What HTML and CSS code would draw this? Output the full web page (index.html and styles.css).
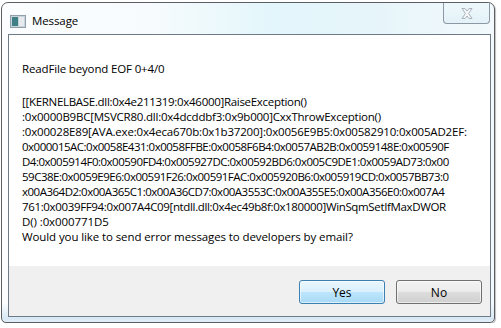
FILE: index.html
```html
<!DOCTYPE html>
<html>
<head>
<meta charset="utf-8">
<link rel="stylesheet" href="styles.css">
</head>
<body>
<div class="window">
  <div class="titlebar">
    <svg class="appicon" width="16" height="13" viewBox="0 0 16 13">
      <rect x="0.5" y="0.5" width="15" height="12" fill="#c9d3da" stroke="#8fa0ac"/>
      <rect x="2" y="2" width="6" height="9" fill="#3f7f86"/>
      <rect x="9" y="2" width="5" height="9" fill="#e4eaee"/>
    </svg>
    <span class="title">Message</span>
    <div class="close">
      <svg width="14" height="13" viewBox="0 0 14 13">
        <path d="M2 1.5 L5 1.5 L7 4 L9 1.5 L12 1.5 L8.6 6.5 L12 11.5 L9 11.5 L7 9 L5 11.5 L2 11.5 L5.4 6.5 Z" fill="#f4f6f8" stroke="#a9b3bb" stroke-width="1"/>
      </svg>
    </div>
  </div>
  <div class="client">
    <div class="content">
      <p class="msg">ReadFile beyond EOF 0+4/0</p>
      <div class="trace">
        <div class="line t-30">[[KERNELBASE.dll:0x4e211319:0x46000]RaiseException()</div>
        <div class="line t-22">:0x0000B9BC[MSVCR80.dll:0x4dcddbf3:0x9b000]CxxThrowException()</div>
        <div class="line t-18">:0x00028E89[AVA.exe:0x4eca670b:0x1b37200]:0x0056E9B5:0x00582910:0x005AD2EF:</div>
        <div class="line t-50">0x000015AC:0x0058E431:0x0058FFBE:0x0058F6B4:0x0057AB2B:0x0059148E:0x00590F</div>
        <div class="line t-50">D4:0x005914F0:0x00590FD4:0x005927DC:0x00592BD6:0x005C9DE1:0x0059AD73:0x00</div>
        <div class="line t-50">59C38E:0x0059E9E6:0x00591F26:0x00591FAC:0x005920B6:0x005919CD:0x0057BB73:0</div>
        <div class="line t-50">x00A364D2:0x00A365C1:0x00A36CD7:0x00A3553C:0x00A355E5:0x00A356E0:0x007A4</div>
        <div class="line t-35">761:0x0039FF94:0x007A4C09[ntdll.dll:0x4ec49b8f:0x180000]WinSqmSetIfMaxDWOR</div>
        <div class="line">D() :0x000771D5</div>
        <div class="line">Would you like to send error messages to developers by email?</div>
      </div>
    </div>
    <div class="footer">
      <button class="btn btn-yes">Yes</button>
      <button class="btn btn-no">No</button>
    </div>
  </div>
</div>
</body>
</html>
```

FILE: styles.css
```css
html, body {
  margin: 0;
  padding: 0;
  background: #ffffff;
}
body {
  font-family: "Open Sans", "Noto Sans", sans-serif;
  font-size: 11.5px;
  letter-spacing: -0.1px;
  color: #000;
}
.window {
  margin: 2px 0 0 1px;
  width: 494px;
  height: 321px;
  box-sizing: border-box;
  border: 1px solid #5b5f63;
  border-radius: 7px 7px 5px 5px;
  padding: 0 3px 5px 6px;
  display: flex;
  flex-direction: column;
  background:
    linear-gradient(180deg, rgba(255,255,255,0) 0, rgba(255,255,255,0) 300px, #d7e8f4 316px, #eaf3f9 321px),
    linear-gradient(90deg, #fbfdfe 0, #f7fbfd 30%, #e3f6fb 55%, #e6f5fa 75%, #f3f9fc 100%);
  box-shadow: 1px 1px 1px rgba(0,0,0,0.25);
}
.titlebar {
  height: 31px;
  display: flex;
  align-items: flex-start;
  flex-shrink: 0;
}
.appicon {
  margin: 12px 0 0 2px;
}
.title {
  margin: 9px 0 0 6px;
  font-size: 11.5px;
  line-height: 17px;
  color: #000;
}
.close {
  margin-left: auto;
  width: 47px;
  height: 21px;
  box-sizing: border-box;
  border: 1px solid #8c98a3;
  border-top: none;
  border-radius: 0 0 4px 4px;
  display: flex;
  align-items: center;
  justify-content: center;
  background: linear-gradient(180deg, #eef8fb, #e3f2f8);
  margin-right: 1px;
}
.client {
  flex: 1;
  border: 1px solid #6e7b86;
  display: flex;
  flex-direction: column;
  background: #ffffff;
}
.content {
  flex: 1;
  padding: 26px 0 0 13px;
}
.msg {
  margin: 0;
  line-height: 15px;
  white-space: nowrap;
  letter-spacing: -0.15px;
}
.trace {
  margin-top: 18px;
}
.line {
  line-height: 15px;
  white-space: nowrap;
}
.t-18 { letter-spacing: -0.18px; }
.t-22 { letter-spacing: -0.22px; }
.t-30 { letter-spacing: -0.3px; }
.t-35 { letter-spacing: -0.35px; }
.t-50 { letter-spacing: -0.5px; }
.footer {
  height: 50px;
  flex-shrink: 0;
  background: #f0f0f0;
  display: flex;
  justify-content: flex-end;
  align-items: flex-start;
  gap: 11px;
  padding: 14px 8px 0 0;
  box-sizing: border-box;
}
.btn {
  width: 86px;
  height: 24px;
  font-family: "Open Sans", "Noto Sans", sans-serif;
  font-size: 12px;
  border-radius: 3px;
  padding: 0;
  color: #000;
}
.btn-yes {
  border: 1px solid #3c7fb1;
  background: linear-gradient(180deg, #eaf6fd 0, #d9f0fc 50%, #bee6fd 51%, #a7d9f5 100%);
  box-shadow: inset 0 0 0 1px rgba(255,255,255,0.6);
}
.btn-no {
  border: 1px solid #707070;
  background: linear-gradient(180deg, #f2f2f2 0, #ebebeb 50%, #dddddd 51%, #cfcfcf 100%);
  box-shadow: inset 0 0 0 1px rgba(255,255,255,0.6);
}
```
